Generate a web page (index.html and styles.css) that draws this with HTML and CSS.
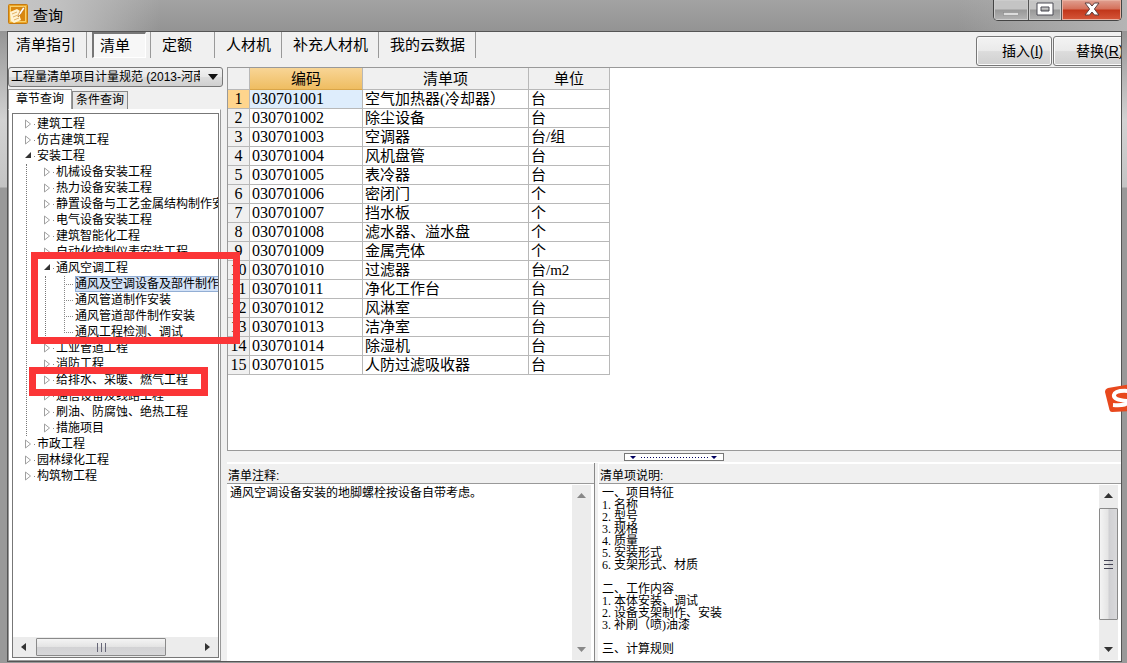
FILE: index.html
```html
<!DOCTYPE html>
<html lang="zh-CN">
<head>
<meta charset="utf-8">
<title>查询</title>
<link rel="stylesheet" href="styles.css">
</head>
<body>
<div class="window">
  <header class="titlebar">
    <svg class="app-icon" width="20" height="20" viewBox="0 0 20 20" aria-hidden="true">
      <rect x=".5" y=".5" width="19" height="19" rx="1" fill="#eba526" stroke="#c47a12"/>
      <rect x="2.500" y="2.500" width="15" height="15" fill="#d98710" stroke="#f7cf6b"/>
      <path d="M2 8l7-3 3 2-1 3 2 6-7 3-3-2z" fill="#fff3d2"/>
      <path d="M11 9l4-6 2 1-4 6-3 3z" fill="#fff" stroke="#b96d0c" stroke-width=".6"/>
      <path d="M4 10l5-2M5 13l5-2M6 16l5-2" stroke="#dba24c" stroke-width=".8"/>
    </svg>
    <h1 class="title">查询</h1>
    <div class="caption-buttons">
      <button class="cap cap-min" aria-label="最小化"><svg width="16" height="6" viewBox="0 0 16 6"><rect x=".5" y="1.500" width="15" height="3" fill="#ddd" stroke="#8a8a8a" stroke-width=".6"/></svg></button>
      <button class="cap cap-max" aria-label="最大化"><svg width="18" height="14" viewBox="0 0 18 14"><path fill-rule="evenodd" d="M1 1h16v12H1zM5 5v4h8V5z" fill="#fff" stroke="#4b4b55"/></svg></button>
      <button class="cap cap-close" aria-label="关闭"><svg width="16" height="14" viewBox="0 0 16 14"><path d="M1 1h4.500l2.500 3 2.500-3H15l-4.600 6L15 13h-4.500L8 10l-2.500 3H1l4.600-6z" fill="#fff" stroke="#5c4040"/></svg></button>
    </div>
  </header>

  <div class="client">
    <div class="toolbar">
      <nav class="main-tabs">
        <button class="main-tab">清单指引</button>
        <div class="tab-slot"><button class="main-tab pressed">清单</button></div>
        <button class="main-tab">定额</button>
        <button class="main-tab">人材机</button>
        <button class="main-tab">补充人材机</button>
        <button class="main-tab">我的云数据</button>
      </nav>
      <div class="actions">
        <button class="action">插入(<u>I</u>)</button>
        <button class="action">替换(<u>R</u>)</button>
      </div>
    </div>

    <div class="main">
      <aside class="side">
        <div class="combo">
          <select aria-label="清单规范"><option>工程量清单项目计量规范 (2013-河南)</option></select>
          <svg class="combo-arrow" width="10" height="6" viewBox="0 0 10 6"><path d="M0 0h10L5 6z" fill="#111"/></svg>
        </div>
        <div class="side-tabs">
          <button class="side-tab active">章节查询</button>
          <button class="side-tab">条件查询</button>
        </div>
        <div class="side-panel">
          <div class="tree-box">
            <svg width="0" height="0" class="defs" aria-hidden="true">
              <symbol id="closed" viewBox="0 0 13 16"><path d="M1.500 4v8l5-4z" fill="#fff" stroke="#a0a0a0"/><rect x="10" y="8" width="1" height="1" fill="#888"/></symbol>
              <symbol id="open" viewBox="0 0 13 16"><path d="M7 4v6H1z" fill="#333"/><rect x="10" y="8" width="1" height="1" fill="#888"/></symbol>
              <symbol id="leaf" viewBox="0 0 13 16"><path d="M2.500 0v16M2 8.500h9" fill="none" stroke="#888" stroke-dasharray="1 1"/></symbol>
              <symbol id="last" viewBox="0 0 13 16"><path d="M2.500 0v8M2 8.500h9" fill="none" stroke="#888" stroke-dasharray="1 1"/></symbol>
            </svg>
            <ul class="tree">
              <li><div class="row"><svg class="twist"><use href="#closed"/></svg><span>建筑工程</span></div></li>
              <li><div class="row"><svg class="twist"><use href="#closed"/></svg><span>仿古建筑工程</span></div></li>
              <li><div class="row"><svg class="twist"><use href="#open"/></svg><span>安装工程</span></div>
                <ul class="branch">
                  <li><div class="row"><svg class="twist"><use href="#closed"/></svg><span>机械设备安装工程</span></div></li>
                  <li><div class="row"><svg class="twist"><use href="#closed"/></svg><span>热力设备安装工程</span></div></li>
                  <li><div class="row"><svg class="twist"><use href="#closed"/></svg><span>静置设备与工艺金属结构制作安</span></div></li>
                  <li><div class="row"><svg class="twist"><use href="#closed"/></svg><span>电气设备安装工程</span></div></li>
                  <li><div class="row"><svg class="twist"><use href="#closed"/></svg><span>建筑智能化工程</span></div></li>
                  <li><div class="row"><svg class="twist"><use href="#closed"/></svg><span>自动化控制仪表安装工程</span></div></li>
                  <li><div class="row"><svg class="twist"><use href="#open"/></svg><span>通风空调工程</span></div>
                    <ul class="branch">
                      <li><div class="row"><svg class="twist"><use href="#leaf"/></svg><span class="selected">通风及空调设备及部件制作</span></div></li>
                      <li><div class="row"><svg class="twist"><use href="#leaf"/></svg><span>通风管道制作安装</span></div></li>
                      <li><div class="row"><svg class="twist"><use href="#leaf"/></svg><span>通风管道部件制作安装</span></div></li>
                      <li><div class="row"><svg class="twist"><use href="#last"/></svg><span>通风工程检测、调试</span></div></li>
                    </ul>
                  </li>
                  <li><div class="row"><svg class="twist"><use href="#closed"/></svg><span>工业管道工程</span></div></li>
                  <li><div class="row"><svg class="twist"><use href="#closed"/></svg><span>消防工程</span></div></li>
                  <li><div class="row"><svg class="twist"><use href="#closed"/></svg><span>给排水、采暖、燃气工程</span></div></li>
                  <li><div class="row"><svg class="twist"><use href="#closed"/></svg><span>通信设备及线路工程</span></div></li>
                  <li><div class="row"><svg class="twist"><use href="#closed"/></svg><span>刷油、防腐蚀、绝热工程</span></div></li>
                  <li><div class="row"><svg class="twist"><use href="#closed"/></svg><span>措施项目</span></div></li>
                </ul>
              </li>
              <li><div class="row"><svg class="twist"><use href="#closed"/></svg><span>市政工程</span></div></li>
              <li><div class="row"><svg class="twist"><use href="#closed"/></svg><span>园林绿化工程</span></div></li>
              <li><div class="row"><svg class="twist"><use href="#closed"/></svg><span>构筑物工程</span></div></li>
            </ul>
            <div class="hscroll">
              <svg width="5" height="8" viewBox="0 0 5 8"><path d="M5 0v8L0 4z" fill="#333"/></svg>
              <div class="htrack"><div class="hthumb"><svg width="11" height="9" viewBox="0 0 11 9"><path d="M1.500 0v9M5.500 0v9M9.500 0v9" stroke="#667"/></svg></div></div>
              <svg width="5" height="8" viewBox="0 0 5 8"><path d="M0 0v8l5-4z" fill="#333"/></svg>
            </div>
          </div>
        </div>
      </aside>

      <section class="content">
        <div class="grid-box">
          <table class="grid">
            <colgroup><col class="c-num"><col class="c-code"><col class="c-name"><col class="c-unit"></colgroup>
            <thead><tr><th></th><th class="hot">编码</th><th>清单项</th><th>单位</th></tr></thead>
            <tbody>
              <tr class="current"><th>1</th><td>030701001</td><td>空气加热器(冷却器）</td><td>台</td></tr>
              <tr><th>2</th><td>030701002</td><td>除尘设备</td><td>台</td></tr>
              <tr><th>3</th><td>030701003</td><td>空调器</td><td>台/组</td></tr>
              <tr><th>4</th><td>030701004</td><td>风机盘管</td><td>台</td></tr>
              <tr><th>5</th><td>030701005</td><td>表冷器</td><td>台</td></tr>
              <tr><th>6</th><td>030701006</td><td>密闭门</td><td>个</td></tr>
              <tr><th>7</th><td>030701007</td><td>挡水板</td><td>个</td></tr>
              <tr><th>8</th><td>030701008</td><td>滤水器、溢水盘</td><td>个</td></tr>
              <tr><th>9</th><td>030701009</td><td>金属壳体</td><td>个</td></tr>
              <tr><th>10</th><td>030701010</td><td>过滤器</td><td>台/m2</td></tr>
              <tr><th>11</th><td>030701011</td><td>净化工作台</td><td>台</td></tr>
              <tr><th>12</th><td>030701012</td><td>风淋室</td><td>台</td></tr>
              <tr><th>13</th><td>030701013</td><td>洁净室</td><td>台</td></tr>
              <tr><th>14</th><td>030701014</td><td>除湿机</td><td>台</td></tr>
              <tr><th>15</th><td>030701015</td><td>人防过滤吸收器</td><td>台</td></tr>
            </tbody>
          </table>
        </div>
        <div class="splitter">
          <svg width="100" height="8" viewBox="0 0 100 8" aria-hidden="true"><rect x=".5" y=".5" width="99" height="7" fill="#fff" stroke="#777"/><path d="M6 3h6L9 6zM87 3h6l-3 3z" fill="#000060"/><path d="M17 4.500h67" stroke="#000060" stroke-dasharray="1 2"/></svg>
        </div>
        <div class="notes">
          <section class="note note-left">
            <label class="note-head" for="remark">清单注释:</label>
            <div class="note-body">
              <textarea id="remark" readonly>通风空调设备安装的地脚螺栓按设备自带考虑。</textarea>
              <div class="vscroll idle">
                <svg width="9" height="5" viewBox="0 0 9 5"><path d="M0 5h9L4.500 0z"/></svg>
                <svg width="9" height="5" viewBox="0 0 9 5"><path d="M0 0h9L4.500 5z"/></svg>
              </div>
            </div>
          </section>
          <section class="note note-right">
            <label class="note-head" for="detail">清单项说明:</label>
            <div class="note-body">
              <textarea id="detail" class="tight" readonly>一、项目特征
1. 名称
2. 型号
3. 规格
4. 质量
5. 安装形式
6. 支架形式、材质

二、工作内容
1. 本体安装、调试
2. 设备支架制作、安装
3. 补刷（喷)油漆

三、计算规则</textarea>
              <div class="vscroll">
                <svg width="9" height="5" viewBox="0 0 9 5"><path d="M0 5h9L4.500 0z"/></svg>
                <div class="vtrack"><div class="vthumb"><svg width="9" height="11" viewBox="0 0 9 11"><path d="M0 1.500h9M0 5.500h9M0 9.500h9" stroke="#445"/></svg></div></div>
                <svg width="9" height="5" viewBox="0 0 9 5"><path d="M0 0h9L4.500 5z"/></svg>
              </div>
            </div>
          </section>
        </div>
      </section>
    </div>
  </div>

  <div class="mark mark-group"></div>
  <div class="mark mark-item"></div>
  <svg class="ime" width="22" height="29" viewBox="0 0 22 29" aria-hidden="true">
    <path d="M3 4L26 0v27L7 28q-2 0-2.500-2L0 8q0-3 3-4z" fill="#e8481d"/>
    <path d="M24 7Q10 6 9 11t13 6q2 5-14 4" fill="none" stroke="#fff" stroke-width="4"/>
  </svg>
</div>
</body>
</html>
```
FILE: styles.css
```css
* { box-sizing: border-box; }
body {
  margin: 0;
  font: 12px/16px "Liberation Sans", "Noto Sans CJK SC", sans-serif;
  color: #000;
}
button, select, textarea { font: inherit; color: inherit; margin: 0; border-radius: 0; }
ul { list-style: none; margin: 0; padding: 0; }

.window {
  position: relative;
  display: flex;
  flex-direction: column;
  height: 100vh;
  min-height: 600px;
  overflow: hidden;
  padding: 0 5px 1px 7px;
  background: linear-gradient(#a6a6a6 0, #959595 31px, #d2d2d2 120px, #c4c4c4 187px, #999 188px);
}

.titlebar { display: flex; flex: none; align-items: center; height: 31px; margin: 0 -5px 0 -7px; padding: 0 5px 0 8px;
  background: linear-gradient(90deg, #c6c6c6 0, #c0c0c0 60px, transparent 160px, transparent 85%, #b4b4b4), linear-gradient(#a3a3a3, #939393); }
.app-icon { margin-top: -4px; }
.title { flex: 1; margin: 0 0 0 5px; font-size: 15px; line-height: 20px; font-weight: 400; }
.caption-buttons { display: flex; align-self: flex-start; height: 21px; border: 1px solid #444; border-top: 0; border-radius: 0 0 5px 5px; overflow: hidden; }
.cap { display: flex; align-items: center; justify-content: center; padding: 0 0 3px; border: 0; border-right: 1px solid #555;
  background: linear-gradient(#c4c4c4 45%, #989898 50%, #b4b4b4); box-shadow: inset 0 0 0 1px #ccc; }
.cap-min { width: 35px; padding-top: 10px; }
.cap-max { width: 33px; }
.cap-close { width: 59px; border-right: 0; background: linear-gradient(#e0a091, #d4705a 45%, #c1361a 50%, #d6573a); box-shadow: inset 0 0 0 1px #e8b0a0; }

.client { flex: 1; min-height: 0; display: flex; flex-direction: column; border: 1px solid #555; background: #f0f0f0; }

.toolbar { display: flex; justify-content: space-between; flex: none; height: 35px; overflow: hidden; }
.main-tabs { display: flex; height: 26px; }
.main-tab { padding: 0 10px 0 11px; min-width: 64px; border: 0; border-right: 1px solid #999; background: none; font-size: 15px; line-height: 24px; text-align: left; white-space: nowrap; }
.main-tab:first-child { padding-left: 8px; }
.tab-slot { padding: 0 4px 0 5px; border-right: 1px solid #999; }
.main-tab.pressed { min-width: 54px; height: 26px; padding: 0 8px 0 6px; border: 1px solid #fff; border-top: 2px solid #777; border-left: 2px solid #777; background: #f7f7f7; line-height: 20px; }
.actions { display: flex; flex: none; width: 145px; gap: 1px; padding-top: 4px; overflow: hidden; }
.action { flex: none; width: 76px; height: 30px; padding: 0 0 0 25px; border: 1px solid #777; border-radius: 3px; background: linear-gradient(#f3f3f3, #eaeaea 48%, #dcdcdc 52%, #d0d0d0); box-shadow: inset 0 0 0 1px #fafafa; font-size: 14px; text-align: left; white-space: nowrap; }
.action + .action { padding-left: 22px; }

.main { flex: 1; min-height: 0; display: flex; gap: 4px; }
.side { flex: none; width: 215px; display: flex; flex-direction: column; }
.combo { position: relative; flex: none; display: flex; }
.combo select { flex: 1; min-width: 0; height: 20px; padding: 0 22px 0 2px; appearance: none; border: 1px solid #777; border-radius: 3px; background: linear-gradient(#f2f2f2, #e8e8e8 48%, #dcdcdc 52%, #cfcfcf); line-height: 18px; text-overflow: clip; overflow: hidden; }
.combo-arrow { position: absolute; right: 5px; top: 7px; pointer-events: none; }
.side-tabs { display: flex; align-items: flex-end; flex: none; height: 22px; padding-top: 2px; }
.side-tab { height: 18px; padding: 0 3px; border: 1px solid #888; border-bottom: 0; background: #e6e6e6; line-height: 17px; }
.side-tab.active { height: 20px; padding: 0 7px; border-color: #999; background: #fff; }
.side-panel { flex: 1; min-height: 0; display: flex; width: 213px; padding: 3px 1px 2px 3px; border: 1px solid #999; border-top-color: #fff; background: #fff; }
.tree-box { flex: 1; min-width: 0; display: flex; flex-direction: column; border: 1px solid #777; }
.defs { position: absolute; }
.tree { flex: 1; min-height: 0; padding: 2px 0 0 11px; overflow: hidden; }
.branch { margin-left: 2px; padding-left: 16px; border-left: 1px dotted #777; }
.row { display: flex; height: 16px; line-height: 16px; white-space: nowrap; }
.twist { flex: none; width: 13px; height: 16px; }
.selected { flex: 1; background: #d3e2f7; outline: 1px solid #92aed4; outline-offset: -1px; }
.hscroll { flex: none; display: flex; align-items: center; gap: 10px; height: 20px; padding: 0 8px; background: #ececec; }
.htrack { flex: 1; height: 18px; }
.hthumb { display: flex; align-items: center; justify-content: center; width: 82%; height: 18px; border: 1px solid #8a8a8a; border-radius: 1px; background: linear-gradient(#f4f4f4, #e4e4e4 48%, #d2d2d4 52%, #d8d8da); }

.content { flex: 1; min-width: 0; display: flex; flex-direction: column; }
.grid-box { flex: 1; min-height: 0; overflow: hidden; border: 1px solid #999; border-right: 0; background: #fff; }
.grid { table-layout: fixed; width: 382px; border-collapse: separate; border-spacing: 0; font: 15px/18px "Liberation Serif", "Noto Sans CJK SC", serif; }
.c-num { width: 22px; }
.c-code { width: 113px; }
.c-name { width: 166px; }
.c-unit { width: 81px; }
.grid th, .grid td { height: 19px; padding: 0 0 0 2px; border: solid #b8b8b8; border-width: 0 1px 1px 0; font-weight: 400; white-space: nowrap; }
.grid thead th { height: 22px; padding: 0; background: #f0f0f0; text-align: center; }
.grid tbody th { padding: 0; background: #f0f0f0; text-align: center; font-size: 16px; }
.grid td:nth-child(2) { font-size: 16px; }
.grid thead .hot { background: linear-gradient(#f8d596, #efbd61); border-bottom-color: #d9a548; }
.grid .current th { background: #ffd58d; }
.grid .current td:nth-child(2) { background: #deedfc; }

.splitter { flex: none; display: flex; align-items: center; justify-content: center; height: 12px; border-bottom: 1px solid #fff; }
.notes { flex: none; display: flex; height: 198px; }
.note { display: flex; flex-direction: column; min-width: 0; }
.note-left { flex: 367; border-right: 1px solid #888; }
.note-right { flex: 522; margin-left: 3px; border-left: 1px solid #fff; }
.note-head { flex: none; height: 21px; padding: 4px 0 0 1px; border-bottom: 1px solid #999; border-top: 1px solid #fff; line-height: 16px; }
.note-body { flex: 1; min-height: 0; display: flex; padding: 1px 3px 1px 0; background: #fff; }
.note-body textarea { flex: 1; min-width: 0; padding: 0 3px; border: 0; outline: 0; resize: none; overflow: hidden; background: #fff; line-height: 16px; }
.note-body .tight { padding-top: 2px; font-family: "Liberation Serif", "Noto Sans CJK SC", serif; line-height: 12px; }
.vscroll { flex: none; display: flex; flex-direction: column; align-items: center; justify-content: space-between; width: 19px; padding: 8px 0; gap: 10px; background: #ececec; fill: #333; }
.vscroll.idle { fill: #888; }
.vtrack { flex: 1; width: 19px; }
.vthumb { display: flex; align-items: center; justify-content: center; height: 87%; border: 1px solid #8a8a8a; border-radius: 1px; background: linear-gradient(90deg, #f4f4f4, #e4e4e4 48%, #d0d0d3 52%, #d8d8da); }

.mark { position: absolute; border: 7px solid #fb3537; pointer-events: none; }
.mark-group { left: 31px; top: 252px; width: 209px; height: 92px; }
.mark-item { left: 29px; top: 367px; width: 179px; height: 29px; }
.ime { position: absolute; right: 0; top: 384px; }
```
